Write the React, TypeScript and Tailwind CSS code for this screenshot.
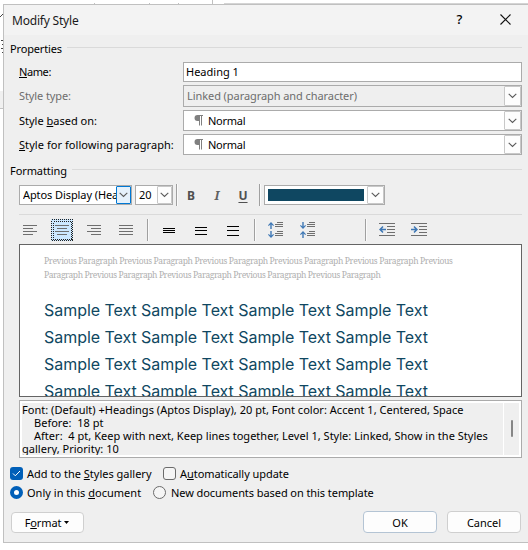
import { ReactNode } from 'react'
import clsx from 'clsx'

function Chevron() {
  return (
    <svg width="9" height="6" viewBox="0 0 9 6" fill="none" stroke="#5a5a5a" strokeWidth="1.1">
      <path d="M0.7 0.8 L4.5 4.5 L8.3 0.8" />
    </svg>
  )
}

function DropButton({ active, className }: { active?: boolean; className?: string }) {
  return (
    <span
      className={clsx(
        'flex shrink-0 items-center justify-center self-stretch rounded-[1px] border',
        active ? 'border-[#0078d4] bg-[#e5f1fb]' : 'border-[#c8c8c8] bg-[#fdfdfd]',
        className ?? 'w-[17px]'
      )}
    >
      <Chevron />
    </span>
  )
}

function SectionTitle({ children, className }: { children: ReactNode; className?: string }) {
  return (
    <div className="flex h-4 items-center pl-[6px]">
      <span className={className}>{children}</span>
      <span className="-mt-px ml-[5px] h-px flex-1 bg-[#dadada]" />
    </div>
  )
}

function Row({ label, height, children }: { label: ReactNode; height: string; children: ReactNode }) {
  return (
    <div className={clsx('flex items-stretch pl-[15px]', height)}>
      <div className="flex w-[164px] shrink-0 items-center whitespace-nowrap pb-px">{label}</div>
      {children}
    </div>
  )
}

function StyleCombo({ children }: { children: ReactNode }) {
  return (
    <div className="flex flex-1 items-center border border-[#ababab] bg-white">
      <div className="flex flex-1 items-center pl-[10px]">
        <svg width="9" height="11" viewBox="0 0 9 11" fill="#808080" className="mr-[5px]">
          <path d="M3.5 0H9v1H8v9.5H7V1H6v9.5H5V6H3.5A3 3 0 0 1 3.5 0Z" />
        </svg>
        <span className="tracking-[-0.25px]">{children}</span>
      </div>
      <DropButton />
    </div>
  )
}

function Separator({ className }: { className?: string }) {
  return <span className={clsx('h-[22px] w-[2px] shrink-0 border-l border-[#a0a0a0] bg-[#fafafa]', className)} />
}

type Line = [x: number, y: number, w: number]

function Lines({ lines, color = '#6f6f6f' }: { lines: Line[]; color?: string }) {
  return (
    <g fill={color} shapeRendering="crispEdges">
      {lines.map(([x, y, w]) => (
        <rect key={`${x}-${y}`} x={x} y={y} width={w} height="1" />
      ))}
    </g>
  )
}

function Tool({ children, selected }: { children: ReactNode; selected?: boolean }) {
  return (
    <span className={clsx('size-[22px] shrink-0', selected && 'bg-[#cce8ff]')}>
      <svg width="22" height="22" viewBox="0 0 22 22">
        {selected && (
          <g fill="none" stroke="#222" strokeDasharray="1 1" shapeRendering="crispEdges">
            <rect x="0.5" y="0.5" width="21" height="21" />
            <rect x="2.5" y="2.5" width="18" height="18" />
          </g>
        )}
        {children}
      </svg>
    </span>
  )
}

const upArrow = 'M3 0 L6 3.2 L5.2 4 L3.7 2.6 V7 H2.3 V2.6 L0.8 4 L0 3.2Z'
const downArrow = 'M3 7 L6 3.8 L5.2 3 L3.7 4.4 V0 H2.3 V4.4 L0.8 3 L0 3.8Z'

function ParagraphSpacing({ top, bottom }: { top: string; bottom: string }) {
  return (
    <Tool>
      <g fill="#3f78b5">
        <path d={top} transform="translate(1 3)" />
        <path d={bottom} transform="translate(1 12)" />
      </g>
      <Lines lines={[[10, 3, 6], [8, 5, 8], [8, 7, 8], [10, 12, 6], [8, 14, 8], [8, 16, 8]]} />
    </Tool>
  )
}

function Indent({ arrow }: { arrow: string }) {
  return (
    <Tool>
      <Lines lines={[[3, 4, 16], [11, 7, 8], [11, 10, 8], [11, 13, 8], [3, 16, 16]]} />
      <path d={arrow} fill="#3f78b5" />
    </Tool>
  )
}

function Button({ children, className }: { children: ReactNode; className?: string }) {
  return (
    <button className={clsx('flex items-center justify-center rounded-[4px] border bg-[#fdfdfd]', className)}>
      {children}
    </button>
  )
}

function Radio({ checked }: { checked?: boolean }) {
  return (
    <span
      className={clsx(
        'size-[13px] shrink-0 rounded-full',
        checked ? 'border-4 border-[#005fb8] bg-white' : 'border border-[#6b6b6b] bg-[#f5f5f5]'
      )}
    />
  )
}

export default function App() {
  return (
    <div className="relative h-[550px] w-[528px] overflow-hidden bg-white font-['Noto_Sans',sans-serif] text-[11px] leading-[13px] text-black">
      {/* document window behind the dialog */}
      <svg className="absolute inset-0" width="528" height="550" shapeRendering="crispEdges">
        <rect x="0" y="91" width="3" height="17" fill="#f0f0f0" />
        <rect x="0" y="108" width="3" height="1" fill="#c4c4c4" />
        <path d="M94.5 3v2M149.5 3v2M178.5 3v2M212.5 0v5" stroke="#c0c0c0" />
        <path d="M224 3.5h304" stroke="#d4d4d4" />
        <path d="M0 16.5h1M1 15.5h1M2 14.5h1M1 40.5h2M1 48.5h2M2 44.5h1M2 52.5h1" stroke="#444" />
      </svg>

      <div className="relative ml-[3px] mt-[4px] h-[539px] border-y border-l border-[#c0c0c0] bg-[#efefef] pr-[6px]">
        <div className="-mr-[6px] flex h-[30px] items-center bg-[#f3f3f3] pl-[8px]">
          <span className="flex-1 text-[12px] tracking-[-0.2px] text-[#1a1a1a]">Modify Style</span>
          <span className="mb-[2px] w-[9px] text-center text-[13px] font-medium">?</span>
          <svg className="mb-[2px] ml-[36px] mr-[17px]" width="11" height="11" viewBox="0 0 11 11" stroke="#111" strokeWidth="1.1">
            <path d="M0.5 0.5 L10.5 10.5 M10.5 0.5 L0.5 10.5" />
          </svg>
        </div>

        <div className="mt-[5px]">
          <SectionTitle className="tracking-[-0.15px]">Properties</SectionTitle>
        </div>

        <div className="mt-[6px]">
          <Row height="h-[20px]" label={<span className="tracking-[-0.4px]"><u>N</u>ame:</span>}>
            <div className="flex flex-1 items-center border border-[#ababab] bg-white pb-px pl-[2px]">Heading 1</div>
          </Row>
        </div>
        <div className="mt-[3px]">
          <Row height="h-[22px]" label={<span className="tracking-[-0.1px] text-[#6d6d6d]">Style type:</span>}>
            <div className="flex flex-1 items-center border border-[#ababab] pl-[3px] text-[#6d6d6d]">
              <span className="flex-1 pb-px tracking-[-0.07px]">Linked (paragraph and character)</span>
              <DropButton />
            </div>
          </Row>
        </div>
        <div className="mt-[3px]">
          <Row height="h-[21px]" label={<span>Style <u>b</u>ased on:</span>}>
            <StyleCombo>Normal</StyleCombo>
          </Row>
        </div>
        <div className="mt-[3px]">
          <Row height="h-[21px]" label={<span className="tracking-[0.06px]"><u>S</u>tyle for following paragraph:</span>}>
            <StyleCombo>Normal</StyleCombo>
          </Row>
        </div>

        <div className="mt-[7px]">
          <SectionTitle className="tracking-[-0.08px]">Formatting</SectionTitle>
        </div>

        {/* font toolbar */}
        <div className="mt-[6px] flex h-[22px] items-center pl-[15px]">
          <div className="flex h-[20px] w-[113px] items-center border border-[#ababab] bg-white pl-[3px]">
            <span className="w-[93px] overflow-hidden whitespace-nowrap pb-px tracking-[-0.09px]">Aptos Display (Hea</span>
            <DropButton active className="w-[15px]" />
          </div>
          <div className="ml-[3px] flex h-[20px] w-[38px] items-center border border-[#ababab] bg-white pl-[3px]">
            <span className="flex-1 pb-px">20</span>
            <DropButton className="w-[15px]" />
          </div>
          <Separator className="ml-[3px]" />
          <span className="ml-[4px] w-[18px] text-center text-[12px] font-bold text-[#505050]">B</span>
          <span className="ml-[8px] w-[18px] text-center font-['Noto_Serif','DejaVu_Serif',serif] text-[12px] italic font-bold text-[#606060]">I</span>
          <span className="ml-[8px] w-[18px] text-center text-[12px] font-bold text-[#505050] underline underline-offset-2">U</span>
          <Separator className="ml-[7px]" />
          <div className="ml-[3px] flex h-[20px] w-[121px] items-center border border-[#ababab] bg-white pl-[3px]">
            <span className="h-[12px] w-[96px] bg-[#0f4761]" />
            <DropButton className="ml-auto w-[17px]" />
          </div>
        </div>

        <div className="ml-[15px] mt-[8px] h-px bg-[#dadada]" />

        {/* paragraph toolbar */}
        <div className="mt-[4px] flex h-[22px] items-center pl-[15px]">
          <Tool><Lines lines={[[4, 6, 14], [4, 9, 10], [4, 12, 14], [4, 15, 10]]} /></Tool>
          <span className="w-[10px]" />
          <Tool selected><Lines lines={[[4, 6, 14], [6, 9, 10], [4, 12, 14], [6, 15, 10]]} /></Tool>
          <span className="w-[10px]" />
          <Tool><Lines lines={[[4, 6, 14], [8, 9, 10], [4, 12, 14], [8, 15, 10]]} /></Tool>
          <span className="w-[10px]" />
          <Tool><Lines lines={[[4, 6, 14], [4, 9, 14], [4, 12, 14], [4, 15, 14]]} /></Tool>
          <Separator className="ml-[10px] mr-[9px]" />
          <Tool><Lines color="#000" lines={[[5, 9, 12], [5, 11, 12], [5, 13, 12]]} /></Tool>
          <span className="w-[10px]" />
          <Tool><Lines color="#000" lines={[[5, 8, 12], [5, 11, 12], [5, 15, 12]]} /></Tool>
          <span className="w-[10px]" />
          <Tool><Lines color="#000" lines={[[5, 7, 12], [5, 11, 12], [5, 16, 12]]} /></Tool>
          <Separator className="ml-[10px] mr-[11px]" />
          <ParagraphSpacing top={upArrow} bottom={downArrow} />
          <span className="w-[10px]" />
          <ParagraphSpacing top={downArrow} bottom={upArrow} />
          <Separator className="ml-[44px] mr-[9px]" />
          <Indent arrow="M3 10.5 L6.5 7 L7.5 8 L6 9.7 H10 V11.3 H6 L7.5 13 L6.5 14Z" />
          <span className="w-[10px]" />
          <Indent arrow="M10 10.5 L6.5 7 L5.5 8 L7 9.7 H3 V11.3 H7 L5.5 13 L6.5 14Z" />
        </div>

        {/* preview */}
        <div className="ml-[15px] mt-[3px] h-[153px] overflow-hidden whitespace-nowrap border border-[#646464] bg-white pl-[24px]">
          <div className="mt-[9px] font-['Noto_Serif',serif] text-[8.5px] leading-[14px] text-[#b0b0b0]">
            <div className="tracking-[-0.37px]">Previous Paragraph Previous Paragraph Previous Paragraph Previous Paragraph Previous Paragraph Previous</div>
            <div className="tracking-[-0.41px]">Paragraph Previous Paragraph Previous Paragraph Previous Paragraph Previous Paragraph</div>
          </div>
          <div className="mt-[15px] font-['Inter',sans-serif] text-[16px] leading-[27px] tracking-[-0.04px] text-[#0f4761]">
            <div>Sample Text Sample Text Sample Text Sample Text</div>
            <div>Sample Text Sample Text Sample Text Sample Text</div>
            <div>Sample Text Sample Text Sample Text Sample Text</div>
            <div>Sample Text Sample Text Sample Text Sample Text</div>
          </div>
        </div>

        {/* description */}
        <div className="ml-[15px] mt-[3px] flex h-[58px] border border-[#ababab] bg-white p-[2px]">
          <div className="w-[481px] overflow-hidden whitespace-pre bg-[#efefef] tracking-[0.02px]">
            <div>Font: (Default) +Headings (Aptos Display), 20 pt, Font color: Accent 1, Centered, Space</div>
            <div className="pl-[12px]">Before:  18 pt</div>
            <div className="pl-[12px]">After:  4 pt, Keep with next, Keep lines together, Level 1, Style: Linked, Show in the Styles</div>
            <div>gallery, Priority: 10</div>
          </div>
          <div className="ml-px flex flex-1 items-center justify-center bg-[#efefef]">
            <span className="mb-px h-[17px] w-[2px] rounded-full bg-[#868686]" />
          </div>
        </div>

        <div className="mt-[9px] flex h-[13px] items-center pl-[6px]">
          <span className="flex size-[13px] items-center justify-center rounded-[3px] bg-[#005fb8]">
            <svg width="9" height="7" viewBox="0 0 9 7" fill="none" stroke="#fff">
              <path d="M1 3.5 L3.3 5.8 L8 1" />
            </svg>
          </span>
          <span className="ml-[4px] w-[124px] whitespace-nowrap">Add to the <u>S</u>tyles gallery</span>
          <span className="ml-[12px] size-[13px] rounded-[3px] border border-[#6b6b6b] bg-[#f5f5f5]" />
          <span className="ml-[4px] tracking-[-0.06px]">A<u>u</u>tomatically update</span>
        </div>
        <div className="mt-[6px] flex h-[13px] items-center pl-[6px]">
          <Radio checked />
          <span className="ml-[4px] w-[126px] whitespace-nowrap tracking-[0.02px]">Only in this <u>d</u>ocument</span>
          <Radio />
          <span className="ml-[5px] tracking-[-0.07px]">New documents based on this template</span>
        </div>

        <div className="mt-[12px] flex h-[23px] items-start pl-[7px]">
          <Button className="mt-px h-[21px] w-[73px] border-[#cfcfcf] pr-px">
            <span className="tracking-[-0.1px]">F<u>o</u>rmat</span>
            <svg className="ml-[3px]" width="5" height="3" viewBox="0 0 5 3"><path d="M0 0h5L2.5 3Z" /></svg>
          </Button>
          <Button className="ml-auto h-[22px] w-[74px] border-[#b4c4d4]">OK</Button>
          <Button className="ml-[10px] mr-px h-[22px] w-[74px] border-[#cfcfcf]">Cancel</Button>
        </div>
      </div>
    </div>
  )
}
